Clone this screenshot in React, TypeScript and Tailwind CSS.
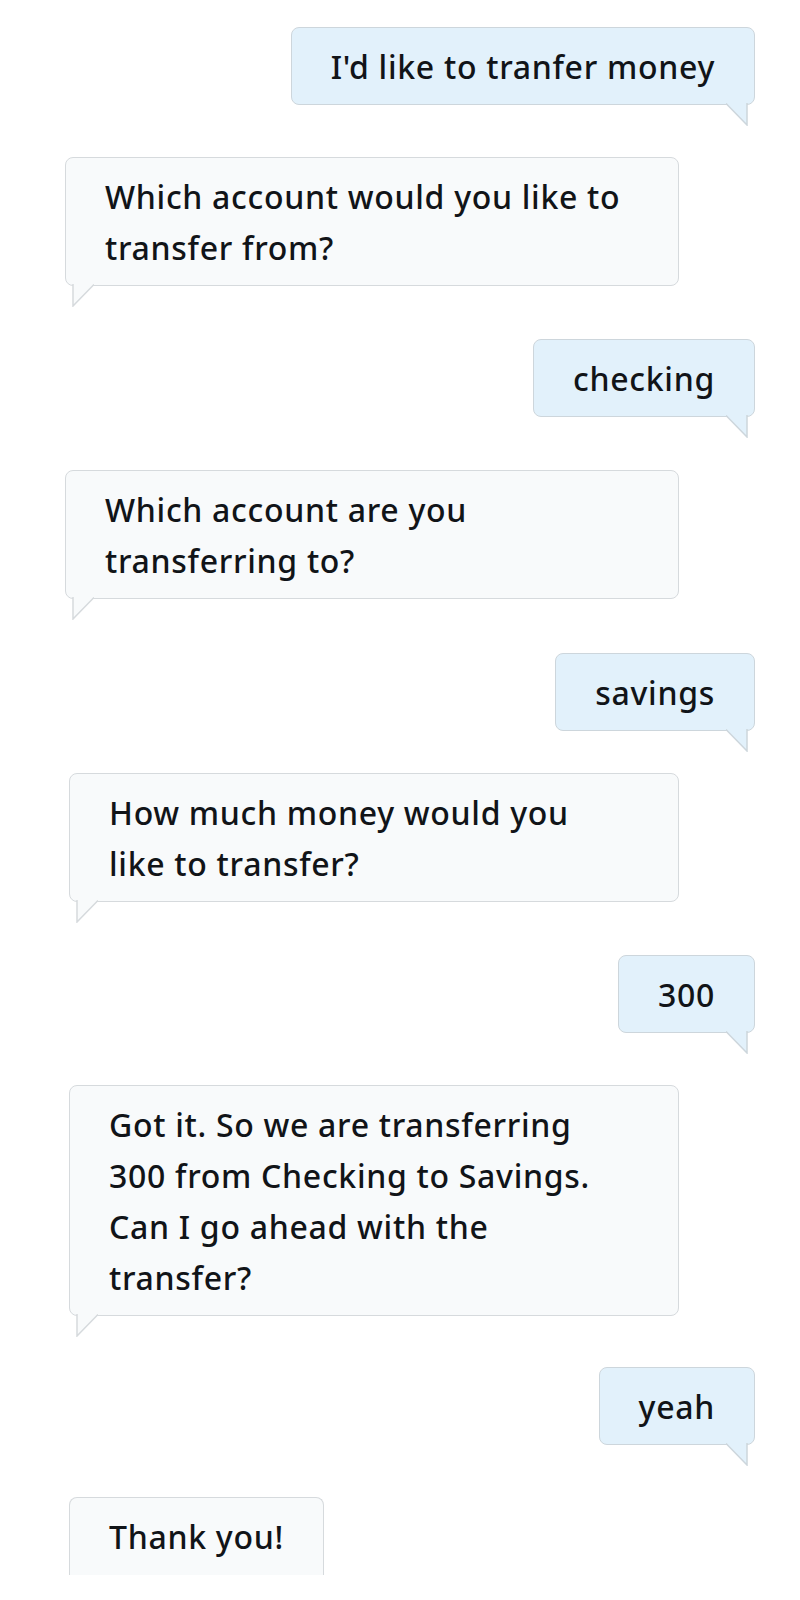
type Msg = { from: 'user' | 'bot'; lines: string[]; mt: number; ml?: number; w?: number; last?: boolean }

const messages: Msg[] = [
  { from: 'user', lines: ["I'd like to tranfer money"], mt: 27 },
  { from: 'bot', lines: ['Which account would you like to', 'transfer from?'], mt: 52, ml: 65, w: 614 },
  { from: 'user', lines: ['checking'], mt: 53 },
  { from: 'bot', lines: ['Which account are you', 'transferring to?'], mt: 53, ml: 65, w: 614 },
  { from: 'user', lines: ['savings'], mt: 54 },
  { from: 'bot', lines: ['How much money would you', 'like to transfer?'], mt: 42, ml: 69, w: 610 },
  { from: 'user', lines: ['300'], mt: 53 },
  {
    from: 'bot',
    lines: ['Got it. So we are transferring', '300 from Checking to Savings.', 'Can I go ahead with the', 'transfer?'],
    mt: 52,
    ml: 69,
    w: 610,
  },
  { from: 'user', lines: ['yeah'], mt: 51 },
  { from: 'bot', lines: ['Thank you!'], mt: 52, ml: 69, last: true },
]

function UserTail() {
  return (
    <svg className="absolute right-[6px] bottom-[-22px]" width="22" height="23" viewBox="0 0 22 23">
      <polygon points="0,0 21,0 21,22" fill="#e2f1fb" />
      <polyline points="0,0.5 21,22 21,0" fill="none" stroke="#cdd6dc" strokeWidth="1.5" />
    </svg>
  )
}

function BotTail() {
  return (
    <svg className="absolute left-[6px] bottom-[-22px]" width="22" height="23" viewBox="0 0 22 23">
      <polygon points="1,0 22,0 1,22" fill="#f8fafb" />
      <polyline points="1,0 1,22 22,0.5" fill="none" stroke="#d6dadd" strokeWidth="1.5" />
    </svg>
  )
}

function Bubble({ m }: { m: Msg }) {
  const text = m.lines.map((l, i) => (
    <span key={i}>
      {l}
      {i < m.lines.length - 1 && <br />}
    </span>
  ))

  if (m.from === 'user') {
    return (
      <div className="flex justify-end pr-[45px]" style={{ marginTop: m.mt }}>
        <div className="relative rounded-[8px] border border-[#cdd6dc] bg-[#e2f1fb] px-[39px] pt-[13px] pb-[12px]">
          {text}
          <UserTail />
        </div>
      </div>
    )
  }

  return (
    <div className="flex" style={{ marginTop: m.mt, paddingLeft: m.ml }}>
      <div
        className={
          m.last
            ? 'relative rounded-t-[8px] border border-b-0 border-[#d6dadd] bg-[#f8fafb] px-[39px] pt-[13px] pb-[13px]'
            : 'relative rounded-[8px] border border-[#d6dadd] bg-[#f8fafb] px-[39px] pt-[13px] pb-[12px]'
        }
        style={m.w ? { width: m.w } : undefined}
      >
        {text}
        {!m.last && <BotTail />}
      </div>
    </div>
  )
}

export default function App() {
  return (
    <div className="min-h-[1600px] w-[800px] bg-white text-[32px] leading-[51px] font-medium tracking-[0.7px] text-[#111418] [font-family:'Noto_Sans',sans-serif]">
      {messages.map((m, i) => (
        <Bubble key={i} m={m} />
      ))}
    </div>
  )
}
